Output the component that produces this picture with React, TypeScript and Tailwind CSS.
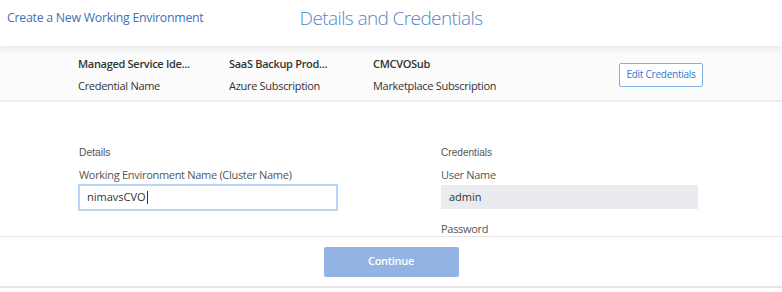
import React from "react";

export default function App() {
  const os = { fontFamily: '"Open Sans", "Liberation Sans", sans-serif' };
  const ar = { fontFamily: '"Liberation Sans", Arial, sans-serif' };
  return (
    <div className="w-[782px] h-[292px] bg-white overflow-hidden relative" style={os}>
      {/* header */}
      <div className="relative z-10 h-[46px] bg-white grid grid-cols-[1fr_auto_1fr] items-start shadow-[0_3px_6px_rgba(0,0,0,0.08)]">
        <div className="pl-[7px] pt-[10px] text-[12.3px] tracking-[-0.25px] text-[#3d72b8] leading-[16px]">
          Create a New Working Environment
        </div>
        <div className="pt-[5px] text-[19px] tracking-[-0.6px] text-[#5886c4] leading-[26px] font-light">
          Details and Credentials
        </div>
        <div />
      </div>
      {/* band */}
      <div className="h-[56px] bg-[#fbfbfb] border-b-2 border-[#ececec] flex items-center pl-[78px] pt-[3px]">
        <div className="flex flex-col gap-[7px] w-[151px] leading-[15px] text-[#333] text-[11px] tracking-[-0.3px]">
          <span className="font-semibold">Managed Service Ide...</span>
          <span>Credential Name</span>
        </div>
        <div className="flex flex-col gap-[7px] w-[144px] leading-[15px] text-[#333] text-[11px] tracking-[-0.3px]">
          <span className="font-semibold">SaaS Backup Prod...</span>
          <span>Azure Subscription</span>
        </div>
        <div className="flex flex-col gap-[7px] w-[246px] leading-[15px] text-[#333] text-[11px] tracking-[-0.3px]">
          <span className="font-semibold">CMCVOSub</span>
          <span>Marketplace Subscription</span>
        </div>
        <button className="h-[24px] w-[84px] border border-[#7fb0e6] rounded-[2px] bg-white text-[10px] tracking-[-0.25px] text-[#2f78cf]">
          Edit Credentials
        </button>
      </div>
      {/* form */}
      <div className="h-[134px] overflow-hidden flex pl-[78px] pt-[45px]">
        <div className="w-[363px] flex flex-col">
          <div className="text-[10.3px] text-[#555] leading-[12px] pl-px" style={ar}>Details</div>
          <div className="mt-[8px] text-[11px] tracking-[-0.3px] text-[#555] leading-[15px] pl-px">
            Working Environment Name (Cluster Name)
          </div>
          <div className="mt-[2px] w-[260px] h-[27px] border-2 border-[#b8d6f7] bg-white flex items-center pl-[7px] text-[11px] text-[#333]">
            nimavsCVO<span className="w-px h-[13px] bg-[#333] ml-[1px]" />
          </div>
        </div>
        <div className="flex flex-col">
          <div className="text-[10.1px] text-[#555] leading-[12px]" style={ar}>Credentials</div>
          <div className="mt-[8px] text-[11px] tracking-[-0.3px] text-[#555] leading-[15px]">User Name</div>
          <div className="mt-[3px] w-[257px] h-[25px] bg-[#e9ebee] flex items-center pl-[8px] text-[11px] text-[#333]">
            admin
          </div>
          <div className="mt-[12px] text-[11px] tracking-[-0.3px] text-[#555] leading-[15px]">Password</div>
        </div>
      </div>
      {/* footer */}
      <div className="h-[52px] border-t border-[#e6e6e6] border-b-2 border-b-[#e4e4e4] bg-white flex items-center justify-center">
        <button className="w-[135px] h-[30px] rounded-[2px] bg-[#93b4e3] text-white text-[11px] tracking-[-0.3px] font-semibold">
          Continue
        </button>
      </div>
    </div>
  );
}
